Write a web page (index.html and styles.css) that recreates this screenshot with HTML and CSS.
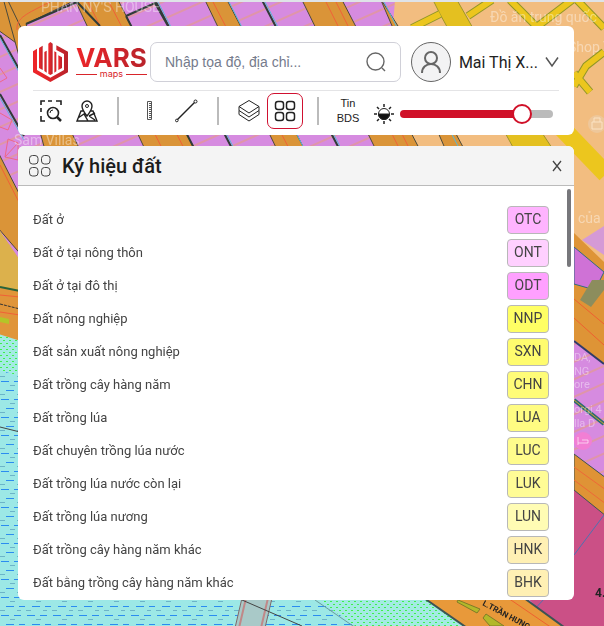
FILE: index.html
```html
<!DOCTYPE html>
<html lang="vi">
<head>
<meta charset="utf-8">
<meta name="viewport" content="width=device-width, initial-scale=1">
<title>VARS maps</title>
<link rel="stylesheet" href="styles.css">
</head>
<body>
<svg class="map" viewBox="0 0 604 626" preserveAspectRatio="xMidYMid slice" aria-hidden="true">
  <defs>
    <pattern id="water" width="26" height="18" patternUnits="userSpaceOnUse">
      <rect width="26" height="18" fill="#9ce8e6"/>
      <path d="M1 3.500h8M14 3.500h7M6 12.500h8M19 12.500h6" stroke="#2b8cf0"/>
      <path d="M10 7.500h5M0 16.500h5M17 16.500h4" stroke="#6cb4c8"/>
    </pattern>
    <pattern id="marsh" width="6" height="6" patternUnits="userSpaceOnUse">
      <rect width="6" height="6" fill="#a3ebe3"/>
      <path d="M0 1.500h2M3 4.500h2" stroke="#3ef04c"/>
    </pattern>
    <pattern id="plots" width="30" height="16" patternUnits="userSpaceOnUse" patternTransform="rotate(-24)">
      <rect width="30" height="16" fill="#d68be0"/>
      <path d="M0 4h30" stroke="#e8a070"/>
    </pattern>
  </defs>
  <rect width="604" height="626" fill="url(#plots)"/>
  <path d="M395 0H604V300L380 190Z" fill="#f2bd80"/>
  <g fill="#da9438" stroke="#4a4a3c">
    <path d="M-2 -2H80L26 24L40 60L-2 30Z"/>
    <path d="M74 -2H117L200 160H150Z"/>
    <path d="M204 -2H226L310 160H282Z"/>
    <path d="M301 -2H341L420 150H376Z"/>
    <path d="M380 -2L398 26L470 160H450Z"/>
    <path d="M-2 -20L80 150H45Z"/>
    <path d="M-2 152L30 215V265L-2 228Z"/>
  </g>
  <g fill="none" stroke="#f06038">
    <path d="M17 30C16 18 26 14 50 2M87 0L168 160M108 0L190 160M212 0L295 160M325 0L405 160M335 0L415 160M0 165L24 212"/>
  </g>
  <path d="M-2 36L24 79V138L-2 96Z" fill="url(#plots)"/>
  <g fill="none" stroke="#303c38" stroke-width="2">
    <path d="M0 35L24 78M0 94L24 136M126 16L155 3L168 26M126 16L195 150M155 0L238 160M262 0L345 160M26 24L77 2L100 26"/>
  </g>
  <g fill="none" stroke="#58b8d8">
    <path d="M0 38L24 81M0 98L24 140M157 0L240 160M264 0L347 160M383 0L460 150M228 0L310 160"/>
  </g>
  <g fill="none" stroke="#ee6888">
    <path d="M0 68L7 78L0 82M8 139L18 143V160L5 157ZM5 157L18 143M0 113L12 120L8 130L0 127"/>
  </g>
  <path d="M433 0H457L474 30L560 160H520L440 14Z" fill="#e4c020" stroke="#9c962a"/>
  <g fill="none">
    <path d="M412 28L440 14M468 16L492 0M510 0L538 28M538 26L572 0M577 0L604 28M574 86L586 66L604 52M574 73L590 92M574 138L604 168" stroke="#8f9628" stroke-width="8"/>
    <path d="M412 28L440 14M468 16L492 0M510 0L538 28M538 26L572 0M577 0L604 28M574 86L586 66L604 52M574 73L590 92M574 138L604 168" stroke="#ecc61e" stroke-width="6"/>
    <path d="M556 122L606 174" stroke="#ecc61e" stroke-width="18"/>
  </g>
  <path d="M574 233L604 262V286L574 248Z" fill="#de9436"/>
  <path d="M582 240L604 226V255Z" fill="#d59ad6"/>
  <path d="M574 284L604 284V364L574 340Z" fill="#de9436"/>
  <path d="M574 247L604 272L595 290L574 284Z" fill="#cf72d6" stroke="#306c80"/>
  <path d="M580 300L592 280H604V290L591 307Z" fill="#8c8d5d"/>
  <path d="M574 299L604 324M574 318L604 345" stroke="#ee6030" fill="none"/>
  <path d="M574 341L604 364" stroke="#303c68" stroke-width="2"/>
  <path d="M574 400L604 424" stroke="#2c6c70" stroke-width="4"/>
  <path d="M574 400L604 424" stroke="#d8a030"/>
  <path d="M-2 228L24 266V292L-2 287Z" fill="#dcb14c"/>
  <path d="M-2 287L24 292V344L-2 336Z" fill="#e0953a"/>
  <path d="M0 287L20 291" stroke="#28643a" stroke-width="2"/>
  <path d="M0 295L20 297M0 312L20 315" stroke="#f06038"/>
  <path d="M0 304L20 309" stroke="#333" stroke-dasharray="3 1"/>
  <path d="M0 317L9 319V324L0 322Z" fill="#b4c428"/>
  <path d="M-2 368L24 375V590H440L500 640H-2Z" fill="url(#water)"/>
  <path d="M-2 334L24 342V377L-2 370Z" fill="url(#marsh)"/>
  <path d="M0 427L20 432" stroke="#444"/>
  <path d="M242 598H272L265 628H235Z" fill="#a9c9c8" stroke="#806868"/>
  <path d="M246 598L239 628M268 598L261 628" stroke="#c08888" stroke-width="2"/>
  <path d="M242 600L302 626" stroke="#444"/>
  <path d="M316 598H426L470 628H358Z" fill="url(#marsh)"/>
  <path d="M315 600L356 628" stroke="#6c9c9c"/>
  <path d="M520 590H574V470L604 500V626H555Z" fill="#cb5086"/>
  <path d="M574 555L604 515M532 612L545 598" stroke="#4e70b0" fill="none"/>
  <path d="M574 454L606 478V516L574 490Z" fill="#df9336" stroke="#3c5454"/>
  <path d="M574 467L606 490M574 480L606 504" stroke="#ee6838"/>
  <path d="M424 598H524L568 630H470Z" fill="#e8993a" stroke="#3c5454" stroke-width="2"/>
  <path d="M508 598L552 628" stroke="#ee6030"/>
  <path d="M458 600L480 609L477 613L457 602ZM486 614L504 626H490L483 618Z" fill="#b2b82a" stroke="#7f7c28"/>
  <g class="map-label">
    <text x="41" y="12">PHAN NY'S HOUSE</text>
    <text x="14" y="145">Sam Villas</text>
    <text x="490" y="22">Đồ ăn trung quốc</text>
    <text x="568" y="52">Shop T</text>
    <text x="578" y="223">của</text>
  </g>
  <g class="map-label small">
    <text x="574" y="361">DA,</text>
    <text x="574" y="375">NG</text>
    <text x="574" y="388">ore</text>
    <text x="574" y="413">orgi 4</text>
    <text x="574" y="427">lla D</text>
  </g>
  <circle cx="583" cy="441" r="9" fill="#f27fd4"/>
  <path d="M578 437V445M578 443H588V440H582" stroke="#fff" stroke-opacity=".6" fill="none"/>
  <circle cx="597" cy="124" r="9" fill="#eec79a"/>
  <path d="M592 122H602V129H592ZM594 122V118H600V122" fill="none" stroke="#fbe3c4"/>
  <text class="map-number" x="595" y="597">4.</text>
  <text class="map-road" x="0" y="0" transform="translate(482 605) rotate(28)">L.TRẦN HƯNG</text>
  <path d="M0 0H604V2H0Z" fill="#dfe3e8"/>
</svg>

<main class="screen">
  <section class="card toolbar">
    <header class="top">
      <a class="brand" href="#" aria-label="VARS maps">
        <svg class="brand-mark" viewBox="0 0 105 120" aria-hidden="true">
          <defs><linearGradient id="red" x1="0" x2="1"><stop offset=".2" stop-color="#ec2529"/><stop offset="1" stop-color="#b8232b"/></linearGradient></defs>
          <g fill="url(#red)">
            <path d="M0 28L12 20V84L52 107L93 84V36L70 24V10L105 29V91L52 120L0 91Z"/>
            <path d="M18 18L29 11V84L18 78Z"/>
            <path d="M34 30L41 26V92L34 87Z"/>
            <path d="M46 5L52 0L59 5V95L52 99L46 95Z"/>
            <path d="M64 28L70 31V88L64 92Z"/>
            <path d="M76 40L87 46V78L76 84Z"/>
          </g>
        </svg>
        <span class="brand-text">
          <span class="brand-name">VARS</span>
          <span class="brand-sub">maps</span>
        </span>
      </a>
      <label class="search">
        <input type="text" placeholder="Nhập tọa độ, địa chỉ..." aria-label="Tìm kiếm">
        <svg viewBox="0 0 20 20" aria-hidden="true"><circle cx="9.500" cy="9.500" r="8.500"/><path d="M16 16L19 19"/></svg>
      </label>
      <button class="user" type="button">
        <span class="avatar"><svg viewBox="0 0 24 24" aria-hidden="true"><circle cx="12" cy="8" r="6"/><path d="M3 23C3 11 21 11 21 23"/></svg></span>
        <span class="user-name">Mai Thị X...</span>
        <svg class="chevron" viewBox="0 0 14 12" aria-hidden="true"><path d="M1 1.500L7 10L13 1.500"/></svg>
      </button>
    </header>
    <nav class="tools" aria-label="Công cụ">
      <div class="group">
        <button type="button" aria-label="Chọn vùng"><svg viewBox="0 0 24 24"><path stroke-width="1.600" d="M2 6V2H6M9 2H13M17 2H22V6M2 9V13M2 17V22H6"/><circle stroke-width="1.600" cx="14" cy="14" r="5.500"/><path stroke-width="2.500" d="M18 18L22 22"/><path d="M11 14Q11 11 14 11"/></svg></button>
        <button type="button" aria-label="Vị trí"><svg viewBox="0 0 24 24"><path stroke-width="1.400" d="M12 17C8 12 7 9 7 7A5 5 0 0 1 17 7C17 9 16 12 12 17ZM8 12H6L2 22H22L18 12H16M3 19L9 15L13 22M14 17L20 14M14 17L20 21"/><circle cx="12" cy="7" r="1.500"/></svg></button>
      </div>
      <div class="group">
        <button type="button" aria-label="Thước"><svg viewBox="0 0 24 24"><path d="M8.500 2.500H12.500V20.500H8.500Z" stroke="#555"/><path d="M11 4V20" stroke="#555" stroke-width="2" stroke-dasharray="1 1"/></svg></button>
        <button type="button" aria-label="Đo khoảng cách"><svg viewBox="0 0 24 24"><path stroke-width="1.500" d="M2 21L20 3"/><circle cx="1.800" cy="21.500" r="1.300" fill="#fff"/><circle cx="20.500" cy="2.500" r="1.500" fill="#fff"/></svg></button>
      </div>
      <div class="group">
        <button type="button" aria-label="Lớp bản đồ"><svg viewBox="0 0 24 24"><path d="M12 1.500L22 7.500L12 14L2 7.500ZM2 7.500V11.500L12 18L22 11.500V7.500M2 11.500V15.500L12 22L22 15.500V11.500"/></svg></button>
        <button type="button" class="active" aria-label="Ký hiệu đất"><svg viewBox="0 0 24 24"><g stroke-width="1.500"><rect x="2.500" y="2.500" width="8" height="8" rx="2.500"/><rect x="13.500" y="2.500" width="8" height="8" rx="2.500"/><rect x="2.500" y="13.500" width="8" height="8" rx="2.500"/><rect x="13.500" y="13.500" width="8" height="8" rx="2.500"/></g></svg></button>
      </div>
      <div class="group last">
        <button type="button" class="news">Tin<br>BDS</button>
        <label class="opacity">
          <svg viewBox="0 0 20 20" aria-hidden="true"><circle cx="10" cy="10" r="5.500" stroke="#222"/><path d="M4.500 10H15.500A5.500 5.500 0 0 1 4.500 10Z" fill="#111"/><path stroke-width="1.500" d="M10 0V3M10 17V20M0 10H3M17 10H20M3 3L5 5M15 15L17 17M17 3L15 5M5 15L3 17"/></svg>
          <input type="range" min="0" max="100" value="84" aria-label="Độ mờ">
        </label>
      </div>
    </nav>
  </section>

  <section class="card panel">
    <header class="panel-head">
      <svg class="grid-icon" viewBox="0 0 22 22" aria-hidden="true"><rect x=".5" y=".5" width="8.500" height="8.500" rx="3"/><rect x="12.500" y=".5" width="8.500" height="8.500" rx="3"/><rect x=".5" y="12.500" width="8.500" height="8.500" rx="3"/><rect x="12.500" y="12.500" width="8.500" height="8.500" rx="3"/></svg>
      <h1>Ký hiệu đất</h1>
      <button class="close" type="button" aria-label="Đóng"><svg viewBox="0 0 10 12"><path d="M1 1L9 11M9 1L1 11"/></svg></button>
    </header>
    <div class="scroll">
      <ul class="legend">
        <li><span>Đất ở</span><span class="code otc">OTC</span></li>
        <li><span>Đất ở tại nông thôn</span><span class="code ont">ONT</span></li>
        <li><span>Đất ở tại đô thị</span><span class="code odt">ODT</span></li>
        <li><span>Đất nông nghiệp</span><span class="code nnp">NNP</span></li>
        <li><span>Đất sản xuất nông nghiệp</span><span class="code sxn">SXN</span></li>
        <li><span>Đất trồng cây hàng năm</span><span class="code chn">CHN</span></li>
        <li><span>Đất trồng lúa</span><span class="code lua">LUA</span></li>
        <li><span>Đất chuyên trồng lúa nước</span><span class="code luc">LUC</span></li>
        <li><span>Đất trồng lúa nước còn lại</span><span class="code luk">LUK</span></li>
        <li><span>Đất trồng lúa nương</span><span class="code lun">LUN</span></li>
        <li><span>Đất trồng cây hàng năm khác</span><span class="code hnk">HNK</span></li>
        <li><span>Đất bằng trồng cây hàng năm khác</span><span class="code bhk">BHK</span></li>
      </ul>
      <div class="thumb"></div>
    </div>
  </section>
</main>
</body>
</html>
```
FILE: styles.css
```css
* { box-sizing: border-box; }

body {
  margin: 0;
  font-family: Roboto, "Liberation Sans", sans-serif;
  font-size: 13px;
  color: #444;
}

button {
  padding: 0;
  border: 0;
  background: none;
  font: inherit;
  color: inherit;
}

svg {
  display: block;
  flex: none;
  fill: none;
  stroke: #222;
}

.map {
  position: fixed;
  inset: 0;
  width: 100%;
  height: 100%;
  stroke: none;
  z-index: -1;
}
.map-label {
  font-size: 14px;
  fill: #fff;
  fill-opacity: 0.4;
}
.map-label.small { font-size: 11px; }
.map-number {
  font-size: 12px;
  font-weight: 700;
  fill: #222;
}
.map-road {
  font-size: 8px;
  font-weight: 700;
  fill: #222;
}

.screen {
  display: flex;
  flex-direction: column;
  gap: 11px;
  height: 100vh;
  padding: 26px 30px 26px 18px;
}

.card {
  background: #fff;
  border-radius: 6px;
}

.toolbar { padding: 16px 15px 4px; }

.top {
  display: flex;
  align-items: center;
  padding-bottom: 8px;
  border-bottom: 1px solid #e4e4e6;
}

.brand {
  display: flex;
  align-items: center;
  gap: 8px;
  width: 117px;
  text-decoration: none;
  color: #d8242a;
}
.brand-mark {
  width: 35px;
  height: 40px;
  stroke: none;
}
.brand-text { display: block; }
.brand-name {
  display: block;
  font: 700 26px/24px Inter, sans-serif;
  background: linear-gradient(90deg, #ec2529, #b8232b);
  -webkit-background-clip: text;
  background-clip: text;
  color: transparent;
}
.brand-sub {
  display: flex;
  align-items: center;
  gap: 3px;
  font: 9px/8px Inter, sans-serif;
}
.brand-sub::before,
.brand-sub::after {
  content: "";
  flex: 1;
  height: 1px;
  background: #d8242a;
}

.search {
  display: flex;
  flex: 1;
  align-items: center;
  height: 40px;
  padding: 0 14px;
  border: 1px solid #d0d0d8;
  border-radius: 7px;
}
.search input {
  flex: 1;
  min-width: 0;
  padding: 0;
  border: 0;
  outline: 0;
  background: none;
  font: 14px "Liberation Sans", sans-serif;
}
.search input::placeholder { color: #757b8c; }
.search svg {
  width: 20px;
  height: 20px;
  stroke: #666;
  stroke-width: 1.4;
}

.user {
  display: flex;
  align-items: center;
  margin-left: 10px;
}
.avatar {
  display: grid;
  place-items: center;
  width: 40px;
  height: 40px;
  border: 1px solid #666;
  border-radius: 50%;
  background: #f3f3f4;
}
.avatar svg {
  width: 24px;
  height: 24px;
  stroke: #666;
  stroke-width: 2;
}
.user-name {
  margin: 0 7px 0 8px;
  font-size: 16px;
  color: #222;
}
.chevron {
  width: 14px;
  height: 12px;
  stroke: #555;
  stroke-width: 1.5;
}

.tools {
  display: flex;
  align-items: center;
  height: 40px;
}
.group {
  display: flex;
  align-items: center;
  width: 100px;
  height: 28px;
  border-right: 2px solid #bbb;
}
.group:first-child { width: 86px; }
.group:nth-child(2) { padding-left: 14px; }
.group:nth-child(3) { padding-left: 12px; }
.group.last {
  flex: 1;
  padding-left: 17px;
  border: 0;
}
.group button {
  display: grid;
  flex: none;
  place-items: center;
  width: 36px;
  height: 36px;
}
.group button svg {
  width: 24px;
  height: 24px;
}
.group .active {
  border: 1px solid #d01030;
  border-radius: 7px;
}
.group .news {
  width: 24px;
  font: 11px/15px "Liberation Sans", sans-serif;
  text-align: center;
  color: #222;
}
.opacity {
  display: flex;
  flex: 1;
  align-items: center;
  gap: 6px;
  margin-left: 14px;
  padding: 6px 6px 0 0;
}
.opacity svg {
  width: 20px;
  height: 20px;
}
.opacity input {
  flex: 1;
  min-width: 0;
  height: 20px;
  margin: 0;
  appearance: none;
  background: none;
}
.opacity input::-webkit-slider-runnable-track {
  height: 8px;
  border-radius: 4px;
  background: linear-gradient(90deg, #d01028 80%, #bbb 80%);
}
.opacity input::-webkit-slider-thumb {
  appearance: none;
  width: 20px;
  height: 20px;
  margin-top: -6px;
  border: 2px solid #d01028;
  border-radius: 50%;
  background: #fff;
}

.panel {
  display: flex;
  flex: 1;
  flex-direction: column;
  min-height: 0;
  overflow: hidden;
}
.panel-head {
  display: flex;
  flex: none;
  align-items: center;
  height: 40px;
  padding: 0 12px 0 11px;
  border-bottom: 1px solid #bbb;
  background: #f4f4f4;
}
.grid-icon {
  width: 22px;
  height: 22px;
  stroke: #444;
}
.panel h1 {
  margin: 0 auto 0 11px;
  font-size: 20px;
  font-weight: 500;
  line-height: 28px;
  color: #1c1c1c;
}
.close svg {
  width: 10px;
  height: 12px;
  stroke: #444;
  stroke-width: 1.3;
}

.scroll {
  position: relative;
  flex: 1;
  min-height: 0;
  overflow: hidden;
}
.thumb {
  position: absolute;
  top: 3px;
  right: 3px;
  width: 4px;
  height: 78px;
  border-radius: 2px;
  background: #77777b;
}
.legend {
  display: grid;
  gap: 5px;
  margin: 0;
  padding: 20px 25px 0 15px;
  list-style: none;
}
.legend li {
  display: flex;
  align-items: center;
  justify-content: space-between;
  height: 28px;
  line-height: 26px;
}
.code {
  width: 42px;
  height: 28px;
  border: 1px solid #b8b8b8;
  border-radius: 4px;
  font-size: 14px;
  line-height: 25px;
  text-align: center;
}
.otc { background: #ffb4ff; }
.ont { background: #ffd0ff; }
.odt { background: #ffa0ff; }
.nnp { background: #ffff64; }
.sxn { background: #fffc6e; }
.chn { background: #fffc78; }
.lua { background: #fffc82; }
.luc { background: #fffc8c; }
.luk { background: #fffc96; }
.lun { background: #fffcb4; }
.hnk { background: #fff0b4; }
.bhk { background: #fff0b4; }
```
